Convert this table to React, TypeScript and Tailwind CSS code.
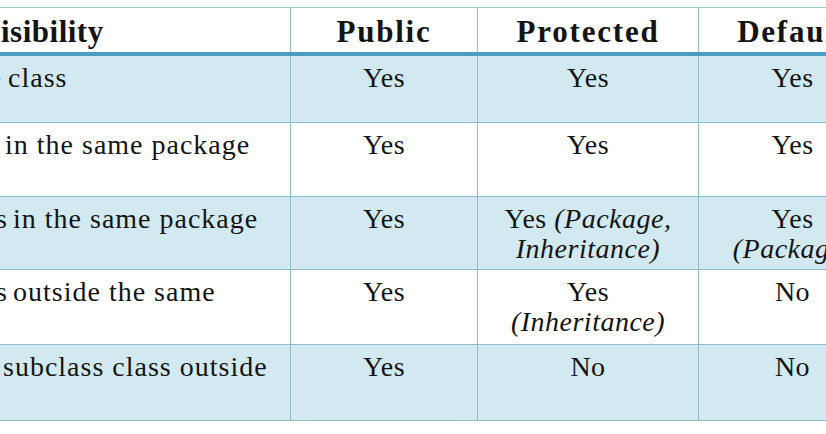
import React from 'react';

type Cell = { main: string; extra?: string; second?: string };

type Row = {
  prefix: string;
  peek: string; // how much of the hidden prefix is still visible
  gap: string;
  label: string;
  height: string;
  shaded: boolean;
  cells: Cell[];
};

const ROWS: Row[] = [
  {
    prefix: 'Same',
    peek: 'w-[2px]',
    gap: 'ml-[6px]',
    label: 'class',
    height: 'h-[67px]',
    shaded: true,
    cells: [{ main: 'Yes' }, { main: 'Yes' }, { main: 'Yes' }, { main: 'Yes' }],
  },
  {
    prefix: 'Class',
    peek: 'w-0',
    gap: 'ml-[5px]',
    label: 'in the same package',
    height: 'h-[74px]',
    shaded: false,
    cells: [{ main: 'Yes' }, { main: 'Yes' }, { main: 'Yes' }, { main: 'No' }],
  },
  {
    prefix: 'Subclass',
    peek: 'w-[8px]',
    gap: 'ml-[5px]',
    label: 'in the same package',
    height: 'h-[73px]',
    shaded: true,
    cells: [
      { main: 'Yes' },
      { main: 'Yes', extra: '(Package,', second: 'Inheritance)' },
      { main: 'Yes', second: '(Package)' },
      { main: 'No' },
    ],
  },
  {
    prefix: 'Subclass',
    peek: 'w-[8px]',
    gap: 'ml-[5px]',
    label: 'outside the same',
    height: 'h-[75px]',
    shaded: false,
    cells: [
      { main: 'Yes' },
      { main: 'Yes', second: '(Inheritance)' },
      { main: 'No' },
      { main: 'No' },
    ],
  },
  {
    prefix: 'Non-',
    peek: 'w-0',
    gap: 'ml-[3px]',
    label: 'subclass class outside',
    height: 'h-[76px]',
    shaded: true,
    cells: [{ main: 'Yes' }, { main: 'No' }, { main: 'No' }, { main: 'No' }],
  },
];

const COLS = ['w-[187px]', 'w-[221px]', 'w-[188px]', 'w-[188px]'];
const HEADERS = ['Public', 'Protected', 'Default', 'Private'];

export default function App() {
  return (
    <div
      className="w-[826px] h-[434px] overflow-hidden bg-white pt-[7px] text-[#141414]"
      style={{ fontFamily: '"Liberation Serif", "Times New Roman", serif' }}
    >
      <div className="w-[1080px] border-t border-[#9cc7d3]">
        {/* Header */}
        <div className="flex h-[48px] border-b-4 border-[#4a9ec2] bg-white">
          <div className="w-[291px] shrink-0 border-r border-[#8dbccb] overflow-hidden pt-[8px]">
            <div className="flex whitespace-nowrap text-[31px] leading-[31px] font-bold tracking-[0.5px]">
              <span className="w-[1px] shrink-0 flex justify-end">V</span>
              <span>isibility</span>
            </div>
          </div>
          {HEADERS.map((h, i) => (
            <div
              key={h}
              className={`${COLS[i]} shrink-0 border-r border-[#8dbccb] pt-[8px] text-center text-[31px] leading-[31px] font-bold tracking-[1.8px]`}
            >
              {h}
            </div>
          ))}
        </div>

        {/* Body rows */}
        {ROWS.map((row, r) => (
          <div
            key={r}
            className={`flex ${row.height} border-b border-[#8dbccb] ${row.shaded ? 'bg-[#d3e9f1]' : 'bg-white'}`}
          >
            <div className="w-[291px] shrink-0 border-r border-[#8dbccb] overflow-hidden pt-[7px]">
              <div className="flex whitespace-nowrap text-[28px] leading-[30px] tracking-[1px]">
                <span className={`${row.peek} shrink-0 flex justify-end`}>{row.prefix}</span>
                <span className={row.gap}>{row.label}</span>
              </div>
            </div>
            {row.cells.map((c, i) => (
              <div
                key={i}
                className={`${COLS[i]} shrink-0 border-r border-[#8dbccb] pt-[7px] text-center text-[28px] leading-[30px] tracking-[0.5px] whitespace-nowrap`}
              >
                <div>
                  {c.main}
                  {c.extra && <em> {c.extra}</em>}
                </div>
                {c.second && <div className="italic">{c.second}</div>}
              </div>
            ))}
          </div>
        ))}
      </div>
    </div>
  );
}
